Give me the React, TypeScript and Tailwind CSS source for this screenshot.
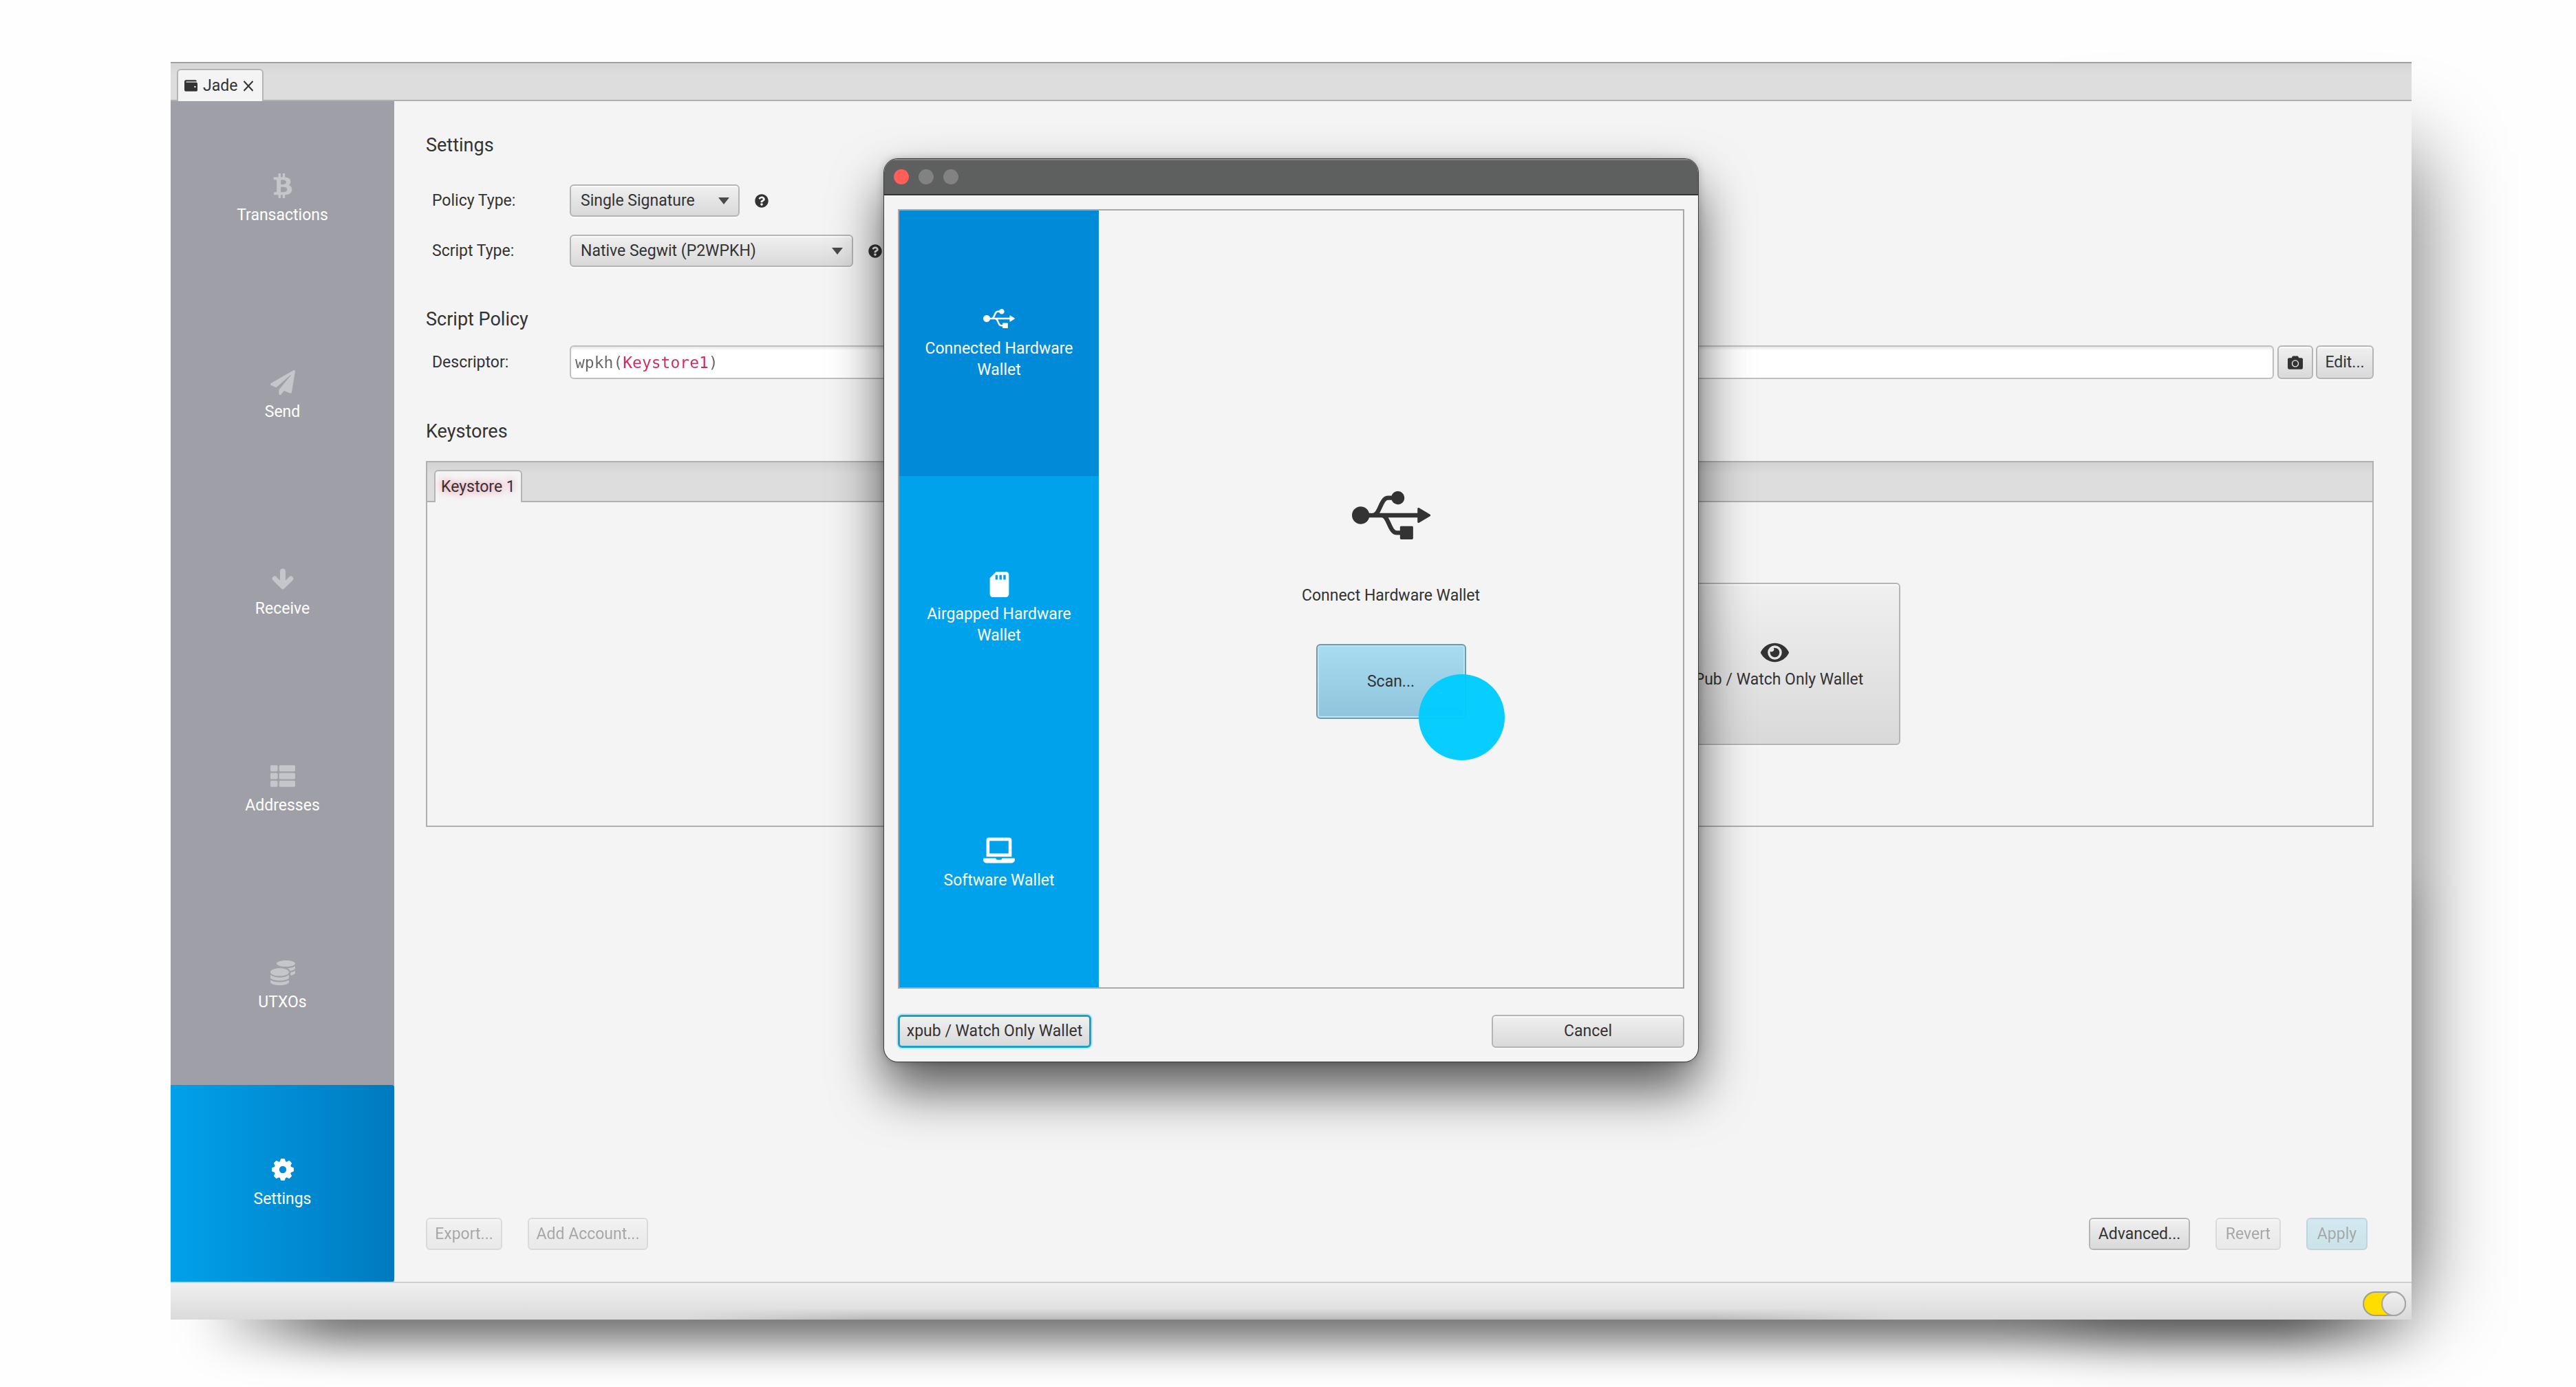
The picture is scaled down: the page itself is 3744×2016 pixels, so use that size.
import React from 'react';
import type { ReactNode } from 'react';
import {
  FaBtc,
  FaCamera,
  FaCoins,
  FaEye,
  FaLaptop,
  FaPaperPlane,
  FaQuestionCircle,
  FaSdCard,
  FaThList,
  FaUsb,
  FaWallet,
} from 'react-icons/fa';

const buttonBase =
  'flex items-center justify-center rounded-md border-2 border-[#b5b5b5] bg-linear-to-b from-[#f0f0f0] to-[#d9d9d9] shadow-[inset_0_2px_0_#fafafa,0_2px_0_#fafafa]';

function DownArrowIcon() {
  return (
    <svg width="36" height="36" viewBox="-2 -2 36 36" fill="none" stroke="currentColor" strokeLinecap="round" strokeLinejoin="round">
      <path d="M16 4.5V24" strokeWidth="8" />
      <path d="M4.2 15L16 26.8L27.8 15" strokeWidth="7" />
    </svg>
  );
}

function GearIcon() {
  return (
    <svg width="36" height="36" viewBox="-18 -18 36 36" fill="currentColor">
      <circle r="8.9" fill="none" stroke="currentColor" strokeWidth="7.4" />
      {[0, 45, 90, 135, 180, 225, 270, 315].map((angle) => (
        <path key={angle} d="M-4.4 -10.5L-3.1 -15Q-2.8 -16 -1.8 -16H1.8Q2.8 -16 3.1 -15L4.4 -10.5Z" transform={`rotate(${angle})`} />
      ))}
    </svg>
  );
}

const navItems = [
  { label: 'Transactions', icon: <FaBtc size={36} /> },
  { label: 'Send', icon: <FaPaperPlane size={36} /> },
  { label: 'Receive', icon: <DownArrowIcon /> },
  { label: 'Addresses', icon: <FaThList size={36} /> },
  { label: 'UTXOs', icon: <FaCoins size={36} /> },
  { label: 'Settings', icon: <GearIcon />, active: true },
];

function TabStrip() {
  return (
    <header className="flex h-[57px] items-end border-t-2 border-b-2 border-t-[#a0a0a0] border-b-[#b0b0b0] bg-linear-to-b from-[#d5d5d5] to-[#dddddd] to-30% pl-[9px]">
      <div className="-mb-[2px] flex h-[47px] items-center gap-2 rounded-t-md border-2 border-b-0 border-[#b5b5b5] bg-[#f4f4f4] px-3 pl-[9px]">
        <FaWallet size={19} />
        <button type="button">Jade</button>
        <button type="button" aria-label="Close tab">
          <svg width="16" height="16" viewBox="0 0 16 16" stroke="#333" strokeWidth="2">
            <path d="M1.5 1L14.5 15M14.5 1L1.5 15" />
          </svg>
        </button>
      </div>
    </header>
  );
}

function Sidebar() {
  return (
    <nav className="flex w-[325px] shrink-0 flex-col bg-[#9f9fa7] text-white">
      {navItems.map((item) => (
        <button
          key={item.label}
          type="button"
          className={
            item.active
              ? 'flex h-[286px] flex-col items-center justify-center gap-[10px] rounded-r-sm bg-linear-to-r from-[#00a1ea] to-[#007abf]'
              : 'flex h-[286px] flex-col items-center justify-center gap-[10px]'
          }
        >
          <span className={item.active ? 'text-white' : 'text-[#c5c6ca]'}>{item.icon}</span>
          {item.label}
        </button>
      ))}
    </nav>
  );
}

function SelectRow({ id, label, value, width }: { id: string; label: string; value: string; width: string }) {
  return (
    <div className="flex items-center">
      <label htmlFor={id} className="w-[209px] pl-[9px]">
        {label}
      </label>
      <div className={'relative ' + width}>
        <select
          id={id}
          className="h-[47px] w-full appearance-none rounded-md border-2 border-[#b5b5b5] bg-linear-to-b from-[#f0f0f0] to-[#d9d9d9] pl-[14px] shadow-[inset_0_2px_0_#fafafa,0_2px_0_#fafafa]"
        >
          <option>{value}</option>
        </select>
        <svg className="pointer-events-none absolute top-[19px] right-[15px]" width="16" height="10" viewBox="0 0 16 10">
          <path d="M0 0H16L8 10Z" fill="#4a4a4a" />
        </svg>
      </div>
      <FaQuestionCircle size={20} className="ml-[22px]" />
    </div>
  );
}

function Heading({ children }: { children: ReactNode }) {
  return <h2 className="text-[27px] leading-9">{children}</h2>;
}

function SettingsPanel() {
  return (
    <main className="flex min-w-0 grow flex-col py-[46px] pr-[55px] pl-[46px]">
      <Heading>Settings</Heading>
      <div className="mt-[39px] flex flex-col gap-[26px]">
        <SelectRow id="policy" label="Policy Type:" value="Single Signature" width="w-[247px]" />
        <SelectRow id="script" label="Script Type:" value="Native Segwit (P2WPKH)" width="w-[412px]" />
      </div>

      <div className="mt-[58px]">
        <Heading>Script Policy</Heading>
      </div>
      <div className="mt-[20px] flex items-center">
        <label htmlFor="descriptor" className="w-[209px] shrink-0 pl-[9px]">
          Descriptor:
        </label>
        <div className="flex h-[49px] grow rounded-md border-2 border-[#c0c0c0] bg-white px-[6px] shadow-[inset_0_3px_3px_#ececec]">
          <input
            id="descriptor"
            type="text"
            defaultValue="wpkh(Keystore1)"
            className="w-full bg-[linear-gradient(90deg,#666_5ch,#cf2a5e_5ch,#cf2a5e_14ch,#666_14ch)] bg-clip-text font-['DejaVu_Sans_Mono',monospace] text-transparent caret-[#333] outline-none"
          />
        </div>
        <button type="button" aria-label="Scan QR code" className={buttonBase + ' ml-[5px] h-[49px] w-[52px]'}>
          <FaCamera size={22} />
        </button>
        <button type="button" className={buttonBase + ' ml-1 h-[49px] w-[84px]'}>
          Edit...
        </button>
      </div>

      <div className="mt-[58px]">
        <Heading>Keystores</Heading>
      </div>
      <section className="mt-[25px] border-2 border-[#b0b0b0]">
        <div className="flex h-[58px] items-end border-b-2 border-[#b0b0b0] bg-linear-to-b from-[#d2d2d2] to-[#dddddd] to-30% pl-[10px]">
          <button
            type="button"
            className="-mb-[2px] h-[47px] rounded-t-md border-2 border-b-0 border-[#b5b5b5] bg-[#f4f4f4] px-2 [text-shadow:0_0_8px_#f298a6,0_0_14px_#f6b6c0]"
          >
            Keystore 1
          </button>
        </div>
        <div className="flex h-[470px] items-center justify-center">
          <div className="grid w-[1454px] grid-cols-4">
            <button type="button" className={buttonBase + ' col-start-4 h-[236px] flex-col'}>
              <FaEye size={41} />
              <span className="mt-1">xPub / Watch Only Wallet</span>
            </button>
          </div>
        </div>
      </section>

      <div className="mt-auto flex items-center pr-[9px]">
        <button type="button" disabled className={buttonBase + ' h-[47px] w-[111px] opacity-40'}>
          Export...
        </button>
        <button type="button" disabled className={buttonBase + ' ml-[37px] h-[47px] w-[175px] opacity-40'}>
          Add Account...
        </button>
        <button type="button" className={buttonBase + ' ml-auto h-[47px] w-[147px]'}>
          Advanced...
        </button>
        <button type="button" disabled className={buttonBase + ' ml-[37px] h-[47px] w-[95px] opacity-40'}>
          Revert
        </button>
        <button
          type="button"
          disabled
          className="ml-[37px] h-[47px] w-[89px] rounded-md border-2 border-[#7fa3b0] bg-linear-to-b from-[#a5dbef] to-[#90cadb] opacity-40"
        >
          Apply
        </button>
      </div>
    </main>
  );
}

function StatusBar() {
  return (
    <footer className="relative flex h-[55px] items-center justify-end border-t-2 border-[#cfcfcf] bg-linear-to-b from-[#f0f0f0] to-[#dadada] pt-[6px] pr-2">
      <div className="absolute inset-x-[750px] bottom-0 h-4 bg-linear-to-b from-transparent to-black/15 [mask-image:linear-gradient(90deg,transparent,black_15%,black_85%,transparent)]" />
      <label className="relative flex h-9 w-[63px] cursor-pointer justify-end rounded-full border-2 border-[#9c9c9c] bg-[#ffdd00]">
        <input type="checkbox" defaultChecked aria-label="Server connection" className="absolute inset-0 appearance-none" />
        <span className="-m-[2px] size-9 rounded-full border-2 border-[#a5a5a5] bg-linear-to-b from-[#efefef] to-[#dedede]" />
      </label>
    </footer>
  );
}

function WalletChoice({ icon, active, last, children }: { icon: ReactNode; active?: boolean; last?: boolean; children: ReactNode }) {
  const height = last ? 'h-[357px]' : 'h-[386px]';
  const tone = active ? 'bg-[#008ad8]' : 'bg-[#00a2eb]';
  return (
    <button
      type="button"
      className={'flex w-full flex-col items-center justify-center gap-[10px] px-8 leading-[31px] ' + height + ' ' + tone}
    >
      <span className="flex h-9 items-center">{icon}</span>
      <span>{children}</span>
    </button>
  );
}

function WalletDialog() {
  return (
    <div
      role="dialog"
      aria-label="Import wallet"
      className="w-[1183px] overflow-hidden rounded-[20px] bg-[#f4f4f4] shadow-[0_0_0_1px_#3c3c3c,0_0_12px_rgba(0,0,0,0.25),0_40px_76px_rgba(0,0,0,0.65)]"
    >
      <div className="flex h-[53px] items-center gap-[14px] border-b-2 border-[#333] bg-[#5e605f] pl-[14px] shadow-[inset_0_2px_0_#838483]">
        <button type="button" aria-label="Close" className="size-[22px] rounded-full bg-[#ff5f57]" />
        <button type="button" aria-label="Minimize" className="size-[22px] rounded-full bg-[#828282]" />
        <button type="button" aria-label="Zoom" className="size-[22px] rounded-full bg-[#828282]" />
      </div>
      <div className="px-5 py-5">
        <div className="flex border-2 border-[#a8a8a8]">
          <div className="w-[290px] shrink-0 text-white">
            <WalletChoice icon={<FaUsb size={46} />} active>
              Connected Hardware
              <br />
              Wallet
            </WalletChoice>
            <WalletChoice icon={<FaSdCard size={37} />}>
              Airgapped Hardware
              <br />
              Wallet
            </WalletChoice>
            <WalletChoice icon={<FaLaptop size={46} />} last>
              Software Wallet
            </WalletChoice>
          </div>
          <div className="flex grow flex-col items-center justify-center pb-1">
            <FaUsb size={114} />
            <p className="mt-[45px]">Connect Hardware Wallet</p>
            <div className="relative mt-[55px]">
              <button
                type="button"
                className="h-[109px] w-[218px] rounded-md border-2 border-[#7699a8] bg-linear-to-b from-[#a8dcf0] to-[#90c4dc] shadow-[inset_0_0_0_2px_#b9e4f4]"
              >
                Scan...
              </button>
              <div className="pointer-events-none absolute top-[44px] left-[149px] size-[125px] rounded-full bg-[#00ccff]/97" />
            </div>
          </div>
        </div>
        <div className="mt-[38px] flex justify-between">
          <button
            type="button"
            className="h-[48px] w-[281px] rounded-md border-3 border-[#1ba3c6] bg-linear-to-b from-[#f0f0f0] to-[#d9d9d9] shadow-[0_0_0_2px_#bfeaf5]"
          >
            xpub / Watch Only Wallet
          </button>
          <button type="button" className={buttonBase + ' h-[48px] w-[280px]'}>
            Cancel
          </button>
        </div>
      </div>
    </div>
  );
}

export default function App() {
  return (
    <div className="min-h-screen overflow-hidden bg-[#fefefe] pt-[90px] pr-[239px] pb-[98px] pl-[248px] font-[Roboto,sans-serif] text-[23px] leading-[30px] text-[#333]">
      <div className="relative">
        <div className="absolute top-[130px] -right-2 bottom-5 w-[500px] bg-black/55 blur-[64px]" />
        <div className="absolute top-[1200px] -right-[30px] -bottom-[35px] left-[40px] bg-[linear-gradient(90deg,transparent,rgba(0,0,0,0.55)_200px,rgba(0,0,0,0.55)_calc(100%-200px),transparent)] blur-[28px]" />
        <div className="relative bg-[#f4f4f4]">
          <TabStrip />
          <div className="flex">
            <Sidebar />
            <SettingsPanel />
          </div>
          <StatusBar />
        </div>
        <div className="absolute inset-x-0 top-[141px] flex justify-center">
          <WalletDialog />
        </div>
      </div>
    </div>
  );
}
